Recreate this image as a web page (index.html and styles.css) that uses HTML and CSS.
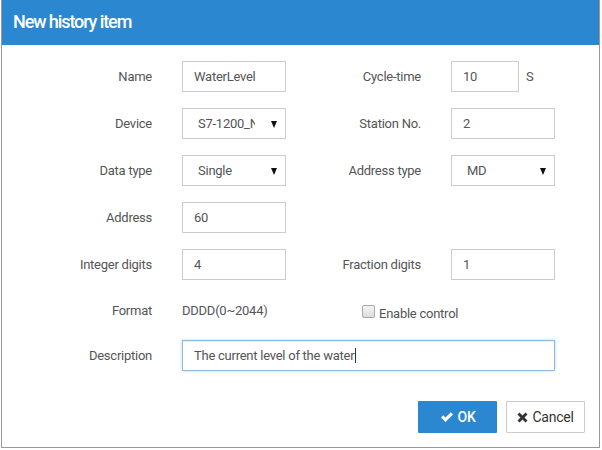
FILE: index.html
```html
<!DOCTYPE html>
<html>
<head>
<meta charset="utf-8">
<link rel="stylesheet" href="styles.css">
</head>
<body>
<div class="dialog">
  <div class="header">New history item</div>
  <div class="form">
    <div class="label">Name</div>
    <div class="field"><div class="input">WaterLevel</div></div>
    <div class="label">Cycle-time</div>
    <div class="field"><div class="input short">10</div><span class="unit">S</span></div>

    <div class="label">Device</div>
    <div class="field"><div class="select"><span class="sel-text">S7-1200_N</span><span class="caret"></span></div></div>
    <div class="label">Station No.</div>
    <div class="field"><div class="input">2</div></div>

    <div class="label">Data type</div>
    <div class="field"><div class="select"><span class="sel-text">Single</span><span class="caret"></span></div></div>
    <div class="label">Address type</div>
    <div class="field"><div class="select"><span class="sel-text">MD</span><span class="caret"></span></div></div>

    <div class="label">Address</div>
    <div class="field"><div class="input">60</div></div>
    <div class="label"></div>
    <div class="field"></div>

    <div class="label">Integer digits</div>
    <div class="field"><div class="input">4</div></div>
    <div class="label">Fraction digits</div>
    <div class="field"><div class="input">1</div></div>

    <div class="label">Format</div>
    <div class="field"><span class="static">DDDD(0~2044)</span></div>
    <div class="check"><span class="box"></span><span>Enable control</span></div>

    <div class="label">Description</div>
    <div class="field wide"><div class="input focus">The current level of the water<span class="cursor"></span></div></div>
  </div>
  <div class="footer">
    <div class="btn primary"><svg width="14" height="12" viewBox="0 0 14 12"><path d="M1 6.5 L3.2 4.3 L5.5 6.6 L10.8 1.3 L13 3.5 L5.5 11 Z" fill="#fff"/></svg>OK</div>
    <div class="btn default"><svg width="11" height="11" viewBox="0 0 11 11"><path d="M0.5 2.5 L2.5 0.5 L5.5 3.5 L8.5 0.5 L10.5 2.5 L7.5 5.5 L10.5 8.5 L8.5 10.5 L5.5 7.5 L2.5 10.5 L0.5 8.5 L3.5 5.5 Z" fill="#333"/></svg>Cancel</div>
  </div>
</div>
</body>
</html>
```
FILE: styles.css
```css
html, body {
  margin: 0;
  padding: 0;
  background: #ffffff;
}
body {
  font-family: Roboto, "Liberation Sans", sans-serif;
  font-size: 13px;
  letter-spacing: -0.25px;
  color: #555;
}
.dialog {
  margin-left: 1px;
  width: 597px;
  height: 447px;
  border-left: 1px solid #9a9a9a;
  border-right: 1px solid #9a9a9a;
  border-bottom: 1px solid #9a9a9a;
  background: #fff;
  display: flex;
  flex-direction: column;
}
.header {
  height: 45px;
  background: #2a87d0;
  color: #fff;
  font-size: 18px;
  font-weight: 500;
  letter-spacing: -1.1px;
  line-height: 44px;
  padding-left: 11px;
  box-sizing: border-box;
}
.form {
  margin-top: 8px;
  display: grid;
  grid-template-columns: 181px 104px 165px 104px;
  grid-template-rows: 47px 47px 47px 47px 47px 44px 47px;
  margin-left: -1px;
}
.label {
  display: flex;
  align-items: center;
  justify-content: flex-end;
  padding-right: 30px;
  color: #555;
}
.field {
  display: flex;
  align-items: center;
  position: relative;
}
.input {
  box-sizing: border-box;
  width: 104px;
  height: 31px;
  border: 1px solid #ccc;
  padding-left: 11px;
  display: flex;
  align-items: center;
  color: #555;
  background: #fff;
  white-space: nowrap;
}
.input.short {
  width: 68px;
}
.unit {
  margin-left: 7px;
  color: #555;
}
.select {
  box-sizing: border-box;
  width: 104px;
  height: 31px;
  border: 1px solid #ccc;
  padding-left: 15px;
  padding-right: 8px;
  display: flex;
  align-items: center;
  justify-content: space-between;
  background: #fff;
}
.sel-text {
  width: 57px;
  overflow: hidden;
  white-space: nowrap;
  color: #555;
}
.caret {
  width: 0;
  height: 0;
  border-left: 3.5px solid transparent;
  border-right: 3.5px solid transparent;
  border-top: 7px solid #111;
  margin-top: 1px;
}
.static {
  color: #555;
}
.check {
  grid-column: 3 / 5;
  display: flex;
  align-items: center;
  padding-left: 76px;
  padding-top: 7px;
  color: #555;
}
.box {
  width: 11px;
  height: 11px;
  border: 1px solid #a8a8a8;
  border-radius: 2px;
  background: linear-gradient(#f4f4f4, #dcdcdc);
  margin-right: 4px;
  margin-top: -5px;
}
.wide {
  grid-column: 2 / 5;
}
.input.focus {
  width: 373px;
  border-color: #8fb9dd;
  box-shadow: inset 0 1px 1px rgba(0,0,0,0.075), 0 0 3px rgba(102,175,233,0.45);
}
.cursor {
  display: inline-block;
  width: 1px;
  height: 15px;
  background: #333;
  margin-left: 1px;
}
.footer {
  margin-top: auto;
  display: flex;
  justify-content: flex-end;
  gap: 9px;
  padding-right: 14px;
  padding-bottom: 14px;
}
.btn {
  box-sizing: border-box;
  width: 79px;
  height: 32px;
  display: flex;
  align-items: center;
  justify-content: center;
  gap: 4px;
  font-size: 14px;
  border-radius: 1px;
}
.btn.primary {
  background: #2a87d0;
  color: #fff;
  font-weight: 500;
}
.btn.default {
  background: #fff;
  border: 1px solid #ccc;
  color: #333;
}
```
